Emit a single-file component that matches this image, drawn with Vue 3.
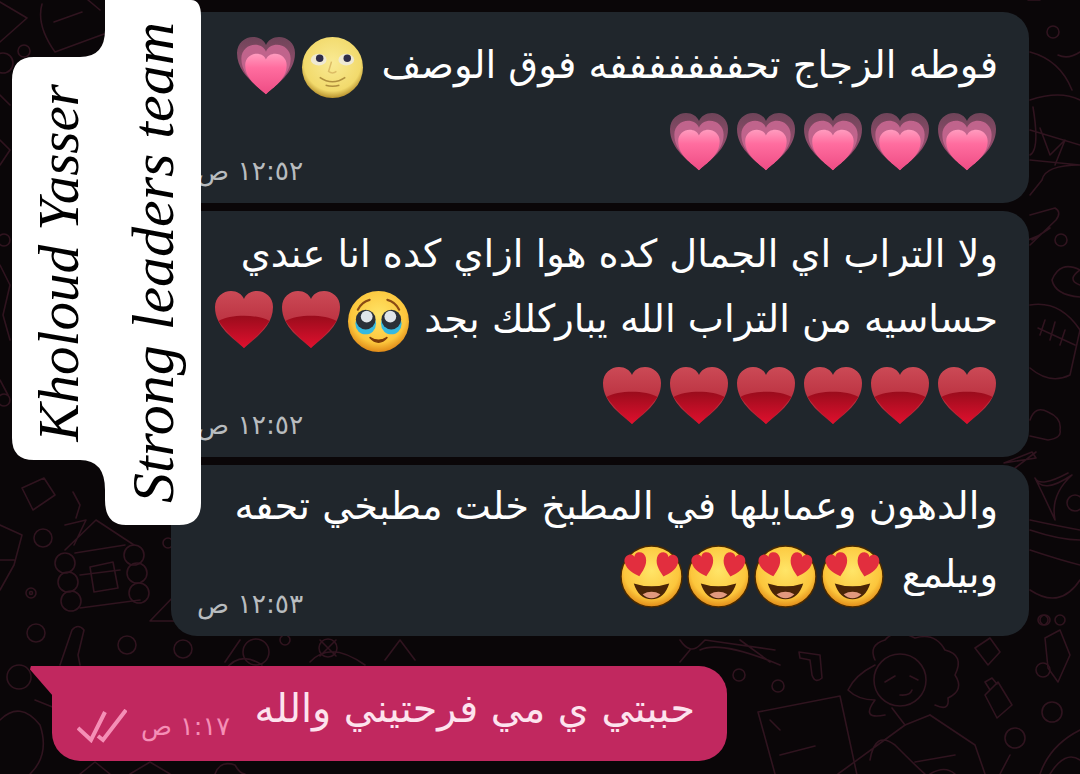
<script setup>
const messages = [
  { id: 1, cls: '', time: '١٢:٥٢ ص', lines: [
    { text: 'فوطه الزجاج تحفففففففه فوق الوصف', emoji: ['moon', 'pink'], wide: true },
    { text: '', emoji: ['pink', 'pink', 'pink', 'pink', 'pink'] },
  ] },
  { id: 2, cls: '', time: '١٢:٥٢ ص', lines: [
    { text: 'ولا التراب اي الجمال كده هوا ازاي كده انا عندي', emoji: [] },
    { text: 'حساسيه من التراب الله يباركلك بجد', emoji: ['plead', 'red', 'red'] },
    { text: '', emoji: ['red', 'red', 'red', 'red', 'red', 'red'] },
  ] },
  { id: 3, cls: 'tight', time: '١٢:٥٣ ص', lines: [
    { text: 'والدهون وعمايلها في المطبخ خلت مطبخي تحفه', emoji: [] },
    { text: 'وبيلمع', emoji: ['eyes', 'eyes', 'eyes', 'eyes'], wide: true },
  ] },
]
const heart = 'M30 58C20 49 1 37 1 17C1 7 9 1 17 1C23 1 28 4 30 9C32 4 37 1 43 1C51 1 59 7 59 17C59 37 40 49 30 58Z'
</script>

<template>
  <div class="stage">
    <svg class="defs" aria-hidden="true">
      <defs>
        <linearGradient id="gp" x1="0" y1="0" x2="0" y2="1"><stop offset="0" stop-color="#ff9cbf"/><stop offset=".35" stop-color="#ff6d9f"/><stop offset="1" stop-color="#ee4c84"/></linearGradient>
        <linearGradient id="gp2" x1="0" y1="0" x2="0" y2="1"><stop offset="0" stop-color="#6f4459"/><stop offset=".5" stop-color="#8f4d6b"/><stop offset="1" stop-color="#a0305f"/></linearGradient>
        <linearGradient id="gr1" x1="0" y1="0" x2="0" y2="1"><stop offset="0" stop-color="#cb4a56"/><stop offset="1" stop-color="#b01f30"/></linearGradient>
        <linearGradient id="gr2" x1="0" y1="0" x2="0" y2="1"><stop offset="0" stop-color="#9a0c1c"/><stop offset="1" stop-color="#e0102e"/></linearGradient>
        <radialGradient id="gy" cx="50%" cy="40%" r="60%"><stop offset="0" stop-color="#ffe568"/><stop offset=".75" stop-color="#fcc63c"/><stop offset="1" stop-color="#e08a18"/></radialGradient>
        <radialGradient id="gm" cx="50%" cy="42%" r="58%"><stop offset="0" stop-color="#f9ea94"/><stop offset=".8" stop-color="#f2da6c"/><stop offset="1" stop-color="#b8922e"/></radialGradient>
        <symbol id="pink" viewBox="0 0 60 60">
          <path :d="heart" fill="url(#gp2)"/>
          <path :d="heart" fill="#c0648c" transform="translate(4.500 8) scale(.85 .86)"/>
          <path :d="heart" fill="url(#gp)" transform="translate(8.500 17) scale(.715 .71)"/>
        </symbol>
        <symbol id="red" viewBox="0 0 60 60">
          <path :d="heart" fill="url(#gr1)"/>
          <path d="M4.500 31C16 24 44 24 55.500 31C47 43 37 51 30 58C23 51 13 43 4.500 31Z" fill="url(#gr2)"/>
        </symbol>
        <symbol id="moon" viewBox="0 0 64 64">
          <circle cx="32" cy="32" r="31" fill="url(#gm)"/>
          <ellipse cx="18" cy="24" rx="8" ry="6" fill="#efe9d2"/><ellipse cx="46" cy="24" rx="8" ry="6" fill="#efe9d2"/>
          <circle cx="19" cy="22.500" r="3.800" fill="#2f2d48"/><circle cx="47" cy="22.500" r="3.800" fill="#2f2d48"/>
          <path d="M31 26L28 36Q32 39 36 36" fill="none" stroke="#dcbc66" stroke-width="1.500"/>
          <path d="M19 42Q32 51 45 42M25 50Q32 52 39 50" fill="none" stroke="#b08f3e" stroke-width="1.500"/>
        </symbol>
        <symbol id="plead" viewBox="0 0 64 64">
          <circle cx="32" cy="32" r="31" fill="url(#gy)"/>
          <path d="M11 20Q15 12 23 10M41 10Q49 12 53 20" fill="none" stroke="#8a4b14" stroke-width="2.200" stroke-linecap="round"/>
          <ellipse cx="19" cy="34" rx="10.500" ry="11" fill="#35b9e0"/><ellipse cx="45" cy="34" rx="10.500" ry="11" fill="#35b9e0"/>
          <circle cx="19" cy="30" r="10" fill="#2a3038"/><circle cx="45" cy="30" r="10" fill="#2a3038"/>
          <circle cx="20" cy="27" r="6" fill="#dfe5ea"/><circle cx="44" cy="27" r="6" fill="#dfe5ea"/>
          <path d="M23 48Q32 54 41 48Q32 58 23 48Z" fill="#7a3a0a" stroke="#7a3a0a" stroke-width="1.500"/>
        </symbol>
        <symbol id="eyes" viewBox="0 0 64 64">
          <circle cx="32" cy="32" r="31" fill="url(#gy)" stroke="#4a2a00" stroke-width="1.500"/>
          <path :d="heart" fill="#e22e3e" transform="translate(5 8) rotate(-14 11 11) scale(.38 .42)"/>
          <path :d="heart" fill="#e22e3e" transform="translate(36 8) rotate(14 11 11) scale(.38 .42)"/>
          <path d="M14 39Q32 45 50 39Q45 55 32 55Q19 55 14 39Z" fill="#4a2506"/>
          <path d="M23 50Q32 45 41 50Q37 54 32 54Q27 54 23 50Z" fill="#e2997e"/>
        </symbol>
      </defs>
    </svg>

    <svg class="pattern" viewBox="0 0 1080 774" aria-hidden="true">
      <g fill="none" stroke="#30141f" stroke-width="1.600" stroke-linejoin="round" stroke-linecap="round">
        <path d="M0 2L27 18L0 42M42 4Q36 25 55 52L104 34M54 22L82 12M88 0L100 10"/>
        <circle cx="24" cy="51" r="6"/><circle cx="3" cy="63" r="10"/>
        <path d="M0 95L10 105M0 140L10 150L0 165M0 265L10 285L3 315L10 340M0 380L8 395"/>
        <circle cx="4" cy="240" r="6"/><circle cx="4" cy="400" r="6"/>
        <path d="M22 488L44 478L55 495L33 510ZM0 525L22 535L14 565L0 590M73 492L80 505L76 518M0 560H14"/>
        <circle cx="43" cy="538" r="9"/><circle cx="31" cy="593" r="5"/><circle cx="31" cy="593" r="1.500"/><circle cx="36" cy="633" r="9"/><circle cx="127" cy="645" r="9"/><circle cx="183" cy="649" r="9"/><circle cx="168" cy="543" r="5"/><circle cx="19" cy="677" r="12"/>
        <path d="M65 550L96 520L134 545M65 525L86 520L74 545M75 553L125 545M80 575L120 570M80 608L140 600"/>
        <path d="M90 567L113 562L118 588L94 592Z"/>
        <circle cx="65" cy="563" r="10"/><circle cx="68" cy="582" r="10"/><circle cx="71" cy="601" r="10"/><circle cx="134" cy="555" r="10"/><circle cx="137" cy="573" r="10"/><circle cx="139" cy="593" r="10"/>
        <path d="M150 621L176 594V621ZM60 665L72 630Q78 623 84 630L78 655L80 665M225 662L240 640M262 665Q240 650 225 670"/>
        <circle cx="256" cy="652" r="13"/><circle cx="285" cy="640" r="5"/><circle cx="328" cy="648" r="9"/>
        <path d="M320 640L336 656M336 640L320 656M310 662Q330 640 365 665M385 660L400 640L415 660M0 720Q20 700 40 725Q50 755 30 774M60 710L35 700M80 774L95 762L110 774M130 774L150 762L170 774M215 774Q220 760 235 765Q240 774 245 774"/>
        <path d="M680 640Q690 655 700 645L705 640L775 650M690 650L680 662M740 640L770 662M700 650Q720 640 780 665"/>
        <circle cx="739" cy="675" r="6"/><circle cx="778" cy="686" r="6"/>
        <path d="M799 652L820 655L822 678Q815 684 812 675L810 660L800 658Z"/>
        <circle cx="900" cy="680" r="26"/>
        <path d="M885 682L895 676M910 676L918 680M900 695Q910 696 912 690M875 660Q868 645 885 640Q895 628 915 638Q935 632 945 650Q965 655 955 675Q965 690 948 698Q950 712 935 705M875 665Q855 675 848 690Q858 700 875 700Q860 720 885 715M892 708L905 725L930 715"/>
        <path d="M758 712L840 696L857 775M758 712L775 774M770 720L780 730M780 755L815 746"/>
        <path d="M838 774L905 725M930 715L975 745L985 774M870 760Q875 730 895 745Q920 770 925 774M915 762L955 755"/>
        <path d="M975 648L990 638L1000 652L988 665ZM1045 638L1060 630L1070 655L1058 682L1048 668Z"/>
        <circle cx="1043" cy="670" r="7"/><circle cx="1052" cy="712" r="10"/><circle cx="1015" cy="738" r="10"/><circle cx="1060" cy="620" r="5"/><circle cx="1045" cy="620" r="5"/>
        <path d="M985 695L998 682L1012 705L997 718Z M990 690L985 682L992 678L997 684M1000 774L1010 755M1040 774Q1050 745 1080 730M1050 774Q1065 750 1080 760M930 774Q945 765 955 774"/>
        <path d="M1028 0L1040 0M1030 52Q1060 60 1072 90M1030 100Q1060 90 1080 100M1033 107Q1040 150 1030 155M1040 128L1050 155L1065 140L1055 165M1030 130L1080 145M1030 160L1080 165Q1045 165 1042 180L1030 195"/>
        <circle cx="1053" cy="32" r="6"/><circle cx="1061" cy="240" r="6"/>
        <path d="M1040 235L1028 240M1030 215L1055 208Q1062 212 1056 220L1030 245M1032 240L1050 228"/>
        <path d="M1080 270Q1060 260 1052 280Q1055 295 1080 297M1080 270Q1066 280 1080 285M1058 55Q1068 60 1080 52"/>
        <path d="M1030 305Q1060 300 1080 330L1070 375Q1050 385 1030 368M1038 328L1075 345M1045 320L1040 335M1055 322L1050 340M1065 330L1060 345"/>
        <path d="M1030 420Q1035 405 1048 412Q1062 418 1060 430Q1062 438 1048 440L1030 436M1032 452L1036 458L1004 463ZM1015 468L1036 452"/>
        <path d="M1035 478Q1042 495 1072 475Q1050 495 1055 520Q1045 498 1035 478Q1040 488 1068 473"/>
        <path d="M1030 520Q1058 526 1080 530M1030 530Q1060 540 1080 540M1030 550Q1060 560 1080 565M1030 590Q1060 610 1080 580"/>
        <circle cx="1075" cy="503" r="8"/><circle cx="1043" cy="620" r="5"/>
      </g>
    </svg>

    <div class="thread">
      <div v-for="m in messages" :key="m.id" class="bubble" :class="m.cls" dir="rtl">
        <div v-for="(l, i) in m.lines" :key="i" class="line" :class="{ 'has-emoji': l.emoji.length, wide: l.wide }">
          <span v-if="l.text" class="txt">{{ l.text }}</span>
          <span v-if="l.emoji.length" class="emos">
            <svg v-for="(e, j) in l.emoji" :key="j" class="emo" :class="e === 'pink' || e === 'red' ? 'hrt' : ''"><use :href="'#' + e"/></svg>
          </span>
        </div>
        <span class="time">{{ m.time }}</span>
      </div>
    </div>

    <div class="mine" dir="rtl">
      <span class="txt mine-txt">حببتي ي مي فرحتيني والله</span>
      <span class="meta">
        <span class="mine-time">١:١٧ ص</span>
        <svg class="ticks" viewBox="0 0 50 34"><path d="M1 19L14 31L28 3M21 27L26 31L49 1" fill="none" stroke="#f58fb6" stroke-width="4"/></svg>
      </span>
    </div>

    <div class="sticker">
      <svg class="sticker-bg" viewBox="0 0 189 525"><path d="M93 0H179Q189 0 189 16V503Q189 525 167 525H114Q93 525 93 500V490Q93 460 68 460H22Q0 460 0 438V80Q0 57 22 57H68Q93 57 93 30Z" fill="#fff"/></svg>
      <span class="name n1">Kholoud Yasser</span>
      <span class="name n2">Strong leaders team</span>
    </div>
  </div>
</template>

<style>
html, body { margin: 0; background: #0a0608; }
</style>

<style scoped>
.stage {
  position: relative;
  width: 1080px;
  height: 774px;
  overflow: hidden;
  background: #0a0608;
  font-family: "DejaVu Sans", "Noto Sans", sans-serif;
}
.defs { position: absolute; width: 0; height: 0; }
.pattern { position: absolute; inset: 0; width: 1080px; height: 774px; }
.thread {
  position: relative;
  display: flex;
  flex-direction: column;
  gap: 8px;
  width: 858px;
  margin-left: 171px;
  padding-top: 12px;
}
.bubble {
  position: relative;
  display: flex;
  flex-direction: column;
  gap: 9px;
  padding: 22px 31px 28px;
  border-radius: 26px;
  background: #20262c;
  color: #fff;
}
.bubble.tight { gap: 12px; padding-top: 20px; padding-bottom: 27px; }
.line {
  display: flex;
  align-items: center;
  gap: 15px;
  height: 46px;
  white-space: nowrap;
}
.line.has-emoji { height: 66px; }
.line.wide { gap: 18px; }
.txt { font-size: 38.400px; line-height: 46px; position: relative; top: -2px; }
.emos { display: flex; gap: 5px; }
.emo { width: 63px; height: 63px; flex: none; margin: 0 -0.500px; }
.emo.hrt { width: 62px; height: 60px; margin: 0; }
.time {
  position: absolute;
  left: 26px;
  bottom: 17px;
  font-size: 26.500px;
  line-height: 30px;
  color: #b8bcbf;
}
.mine {
  position: relative;
  display: flex;
  align-items: center;
  justify-content: flex-start;
  gap: 24px;
  box-sizing: border-box;
  width: 675px;
  height: 95px;
  margin: 30px 0 0 52px;
  padding: 0 32px 8px 25px;
  background: #c1285f;
  border-radius: 0 28px 28px 28px;
}
.mine::before {
  content: "";
  position: absolute;
  left: -22px;
  top: 0;
  width: 23px;
  height: 30px;
  background: #c1285f;
  clip-path: polygon(4% 0, 100% 0, 100% 100%, 0 12%);
}
.mine-txt { color: #fde3ee; font-size: 39.700px; }
.meta { display: flex; align-items: center; gap: 14px; margin-right: auto; padding-top: 32px; }
.mine-time { font-size: 25.600px; line-height: 30px; color: #f58fb6; }
.ticks { width: 50px; height: 34px; }
.sticker {
  position: absolute;
  left: 12px;
  top: 0;
  width: 189px;
  height: 525px;
  display: flex;
  align-items: center;
}
.sticker-bg { position: absolute; inset: 0; width: 189px; height: 525px; }
.name {
  position: relative;
  writing-mode: vertical-rl;
  transform: rotate(180deg);
  font-family: "Liberation Serif", serif;
  font-style: italic;
  color: #000;
  white-space: nowrap;
  text-align: center;
}
.n1 { width: 93px; font-size: 57px; line-height: 93px; }
.n2 { width: 96px; font-size: 60px; line-height: 96px; }
</style>
